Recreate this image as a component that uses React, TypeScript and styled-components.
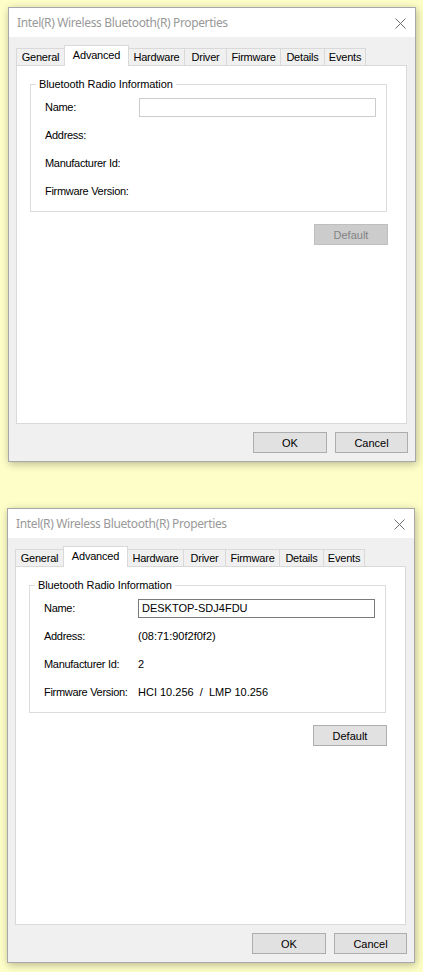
import React from "react";
import styled, {createGlobalStyle} from "styled-components";

const GlobalStyle = createGlobalStyle`
  html, body {
    margin: 0;
    padding: 0;
    background: #fefec8;
  }
  body {
    font-family: "Liberation Sans", Arial, sans-serif;
    font-size: 11px;
    color: #000;
  }
`

const Page = styled.div`
  display: flex;
  flex-direction: column;
  gap: 46px;
  padding: 7px 0 0 8px;
  min-height: 972px;
  box-sizing: border-box;
`

const Window = styled.div<{ $shift: number }>`
  width: 408px;
  height: 455px;
  box-sizing: border-box;
  margin-left: ${p => p.$shift}px;
  border: 1px solid #a8a8a8;
  background: #f0f0f0;
  box-shadow: 1px 2px 8px rgba(0, 0, 0, 0.28);
  display: flex;
  flex-direction: column;
`

const TitleBar = styled.div`
  flex: none;
  height: 29px;
  background: #fff;
  display: flex;
  align-items: center;
  justify-content: space-between;
  padding: 0 9px 0 8px;
  font-family: "Noto Sans", "Open Sans", sans-serif;
  font-size: 12px;
  letter-spacing: -0.36px;
  color: #999;
`

const Close = styled.svg`
  width: 11px;
  height: 11px;
  margin-top: 1px;
`

const Body = styled.div`
  flex: 1;
  display: flex;
  flex-direction: column;
  padding: 8px 8px 8px 7px;
  min-height: 0;
`

const TabRow = styled.div`
  flex: none;
  height: 21px;
  display: flex;
  align-items: flex-end;
  position: relative;
  z-index: 1;
`

const Tab = styled.div<{ $width: number; $active?: boolean }>`
  box-sizing: border-box;
  width: ${p => p.$width}px;
  height: ${p => (p.$active ? 21 : 17)}px;
  margin-bottom: ${p => (p.$active ? 0 : 1)}px;
  margin-left: -1px;
  border: 1px solid #d9d9d9;
  border-bottom: none;
  background: ${p => (p.$active ? "#fff" : "#f0f0f0")};
  display: flex;
  align-items: center;
  justify-content: center;
  padding-bottom: ${p => (p.$active ? 3 : 0)}px;
  letter-spacing: -0.2px;
  white-space: nowrap;

  &:first-child {
    margin-left: 0;
  }
`

const Panel = styled.div`
  flex: 1;
  margin-top: -1px;
  background: #fff;
  border: 1px solid #d9d9d9;
  padding: 12px 0 0 13px;
`

const GroupBox = styled.fieldset`
  box-sizing: border-box;
  width: 357px;
  margin: 0;
  padding: 2px 0 6px 14px;
  border: 1px solid #dcdcdc;
  min-width: 0;
`

const Caption = styled.legend`
  padding: 0 3px;
  margin-left: -9px;
  line-height: 13px;
  letter-spacing: -0.1px;
`

const Row = styled.div`
  height: 28px;
  display: flex;
  align-items: center;
`

const Label = styled.div`
  flex: none;
  width: 94px;
  letter-spacing: -0.3px;
  white-space: nowrap;
`

const Value = styled.div`
  white-space: pre;
`

const NameField = styled.input<{ $enabled: boolean }>`
  box-sizing: border-box;
  width: 237px;
  height: 19px;
  margin: 0;
  padding: 0 3px;
  border: 1px solid ${p => (p.$enabled ? "#7a7a7a" : "#cccccc")};
  background: #fff;
  font-family: "Liberation Sans", Arial, sans-serif;
  font-size: 11px;
  color: #000;
  outline: none;
`

const DefaultRow = styled.div`
  width: 358px;
  display: flex;
  justify-content: flex-end;
  margin-top: 12px;
`

const Button = styled.button<{ $width: number; $disabled?: boolean }>`
  box-sizing: border-box;
  width: ${p => p.$width}px;
  height: 21px;
  margin: 0;
  padding: 0;
  border: 1px solid ${p => (p.$disabled ? "#bfbfbf" : "#adadad")};
  background: ${p => (p.$disabled ? "#cccccc" : "#e1e1e1")};
  color: ${p => (p.$disabled ? "#838383" : "#000")};
  font-family: "Liberation Sans", Arial, sans-serif;
  font-size: 11px;
`

const Footer = styled.div`
  flex: none;
  display: flex;
  justify-content: flex-end;
  gap: 8px;
  margin: 8px -1px 0 0;
`

const tabs = [
  {label: "General", width: 49},
  {label: "Advanced", width: 65, active: true},
  {label: "Hardware", width: 57},
  {label: "Driver", width: 43},
  {label: "Firmware", width: 55},
  {label: "Details", width: 45},
  {label: "Events", width: 42},
]

interface DialogData {
  shift: number
  name: string
  address: string
  manufacturer: string
  firmware: string
  ready: boolean
}

const dialogs: DialogData[] = [
  {shift: 0, name: "", address: "", manufacturer: "", firmware: "", ready: false},
  {
    shift: -1,
    name: "DESKTOP-SDJ4FDU",
    address: "(08:71:90f2f0f2)",
    manufacturer: "2",
    firmware: "HCI 10.256  /  LMP 10.256",
    ready: true,
  },
]

const Dialog: React.FC<{ data: DialogData }> = ({data}) => (
  <Window $shift={data.shift}>
    <TitleBar>
      <span>Intel(R) Wireless Bluetooth(R) Properties</span>
      <Close viewBox="0 0 11 11">
        <path d="M0.5 0.5 L10.5 10.5 M10.5 0.5 L0.5 10.5" stroke="#6e6e6e" strokeWidth="1" fill="none"/>
      </Close>
    </TitleBar>
    <Body>
      <TabRow>
        {tabs.map(t => (
          <Tab key={t.label} $width={t.width} $active={t.active}>{t.label}</Tab>
        ))}
      </TabRow>
      <Panel>
        <GroupBox>
          <Caption>Bluetooth Radio Information</Caption>
          <Row>
            <Label>Name:</Label>
            <NameField $enabled={data.ready} value={data.name} readOnly/>
          </Row>
          <Row>
            <Label>Address:</Label>
            <Value>{data.address}</Value>
          </Row>
          <Row>
            <Label>Manufacturer Id:</Label>
            <Value>{data.manufacturer}</Value>
          </Row>
          <Row>
            <Label>Firmware Version:</Label>
            <Value>{data.firmware}</Value>
          </Row>
        </GroupBox>
        <DefaultRow>
          <Button $width={74} $disabled={!data.ready}>Default</Button>
        </DefaultRow>
      </Panel>
      <Footer>
        <Button $width={74}>OK</Button>
        <Button $width={73}>Cancel</Button>
      </Footer>
    </Body>
  </Window>
)

export default function App() {
  return (
    <>
      <GlobalStyle/>
      <Page>
        {dialogs.map((d, i) => <Dialog key={i} data={d}/>)}
      </Page>
    </>
  )
}
